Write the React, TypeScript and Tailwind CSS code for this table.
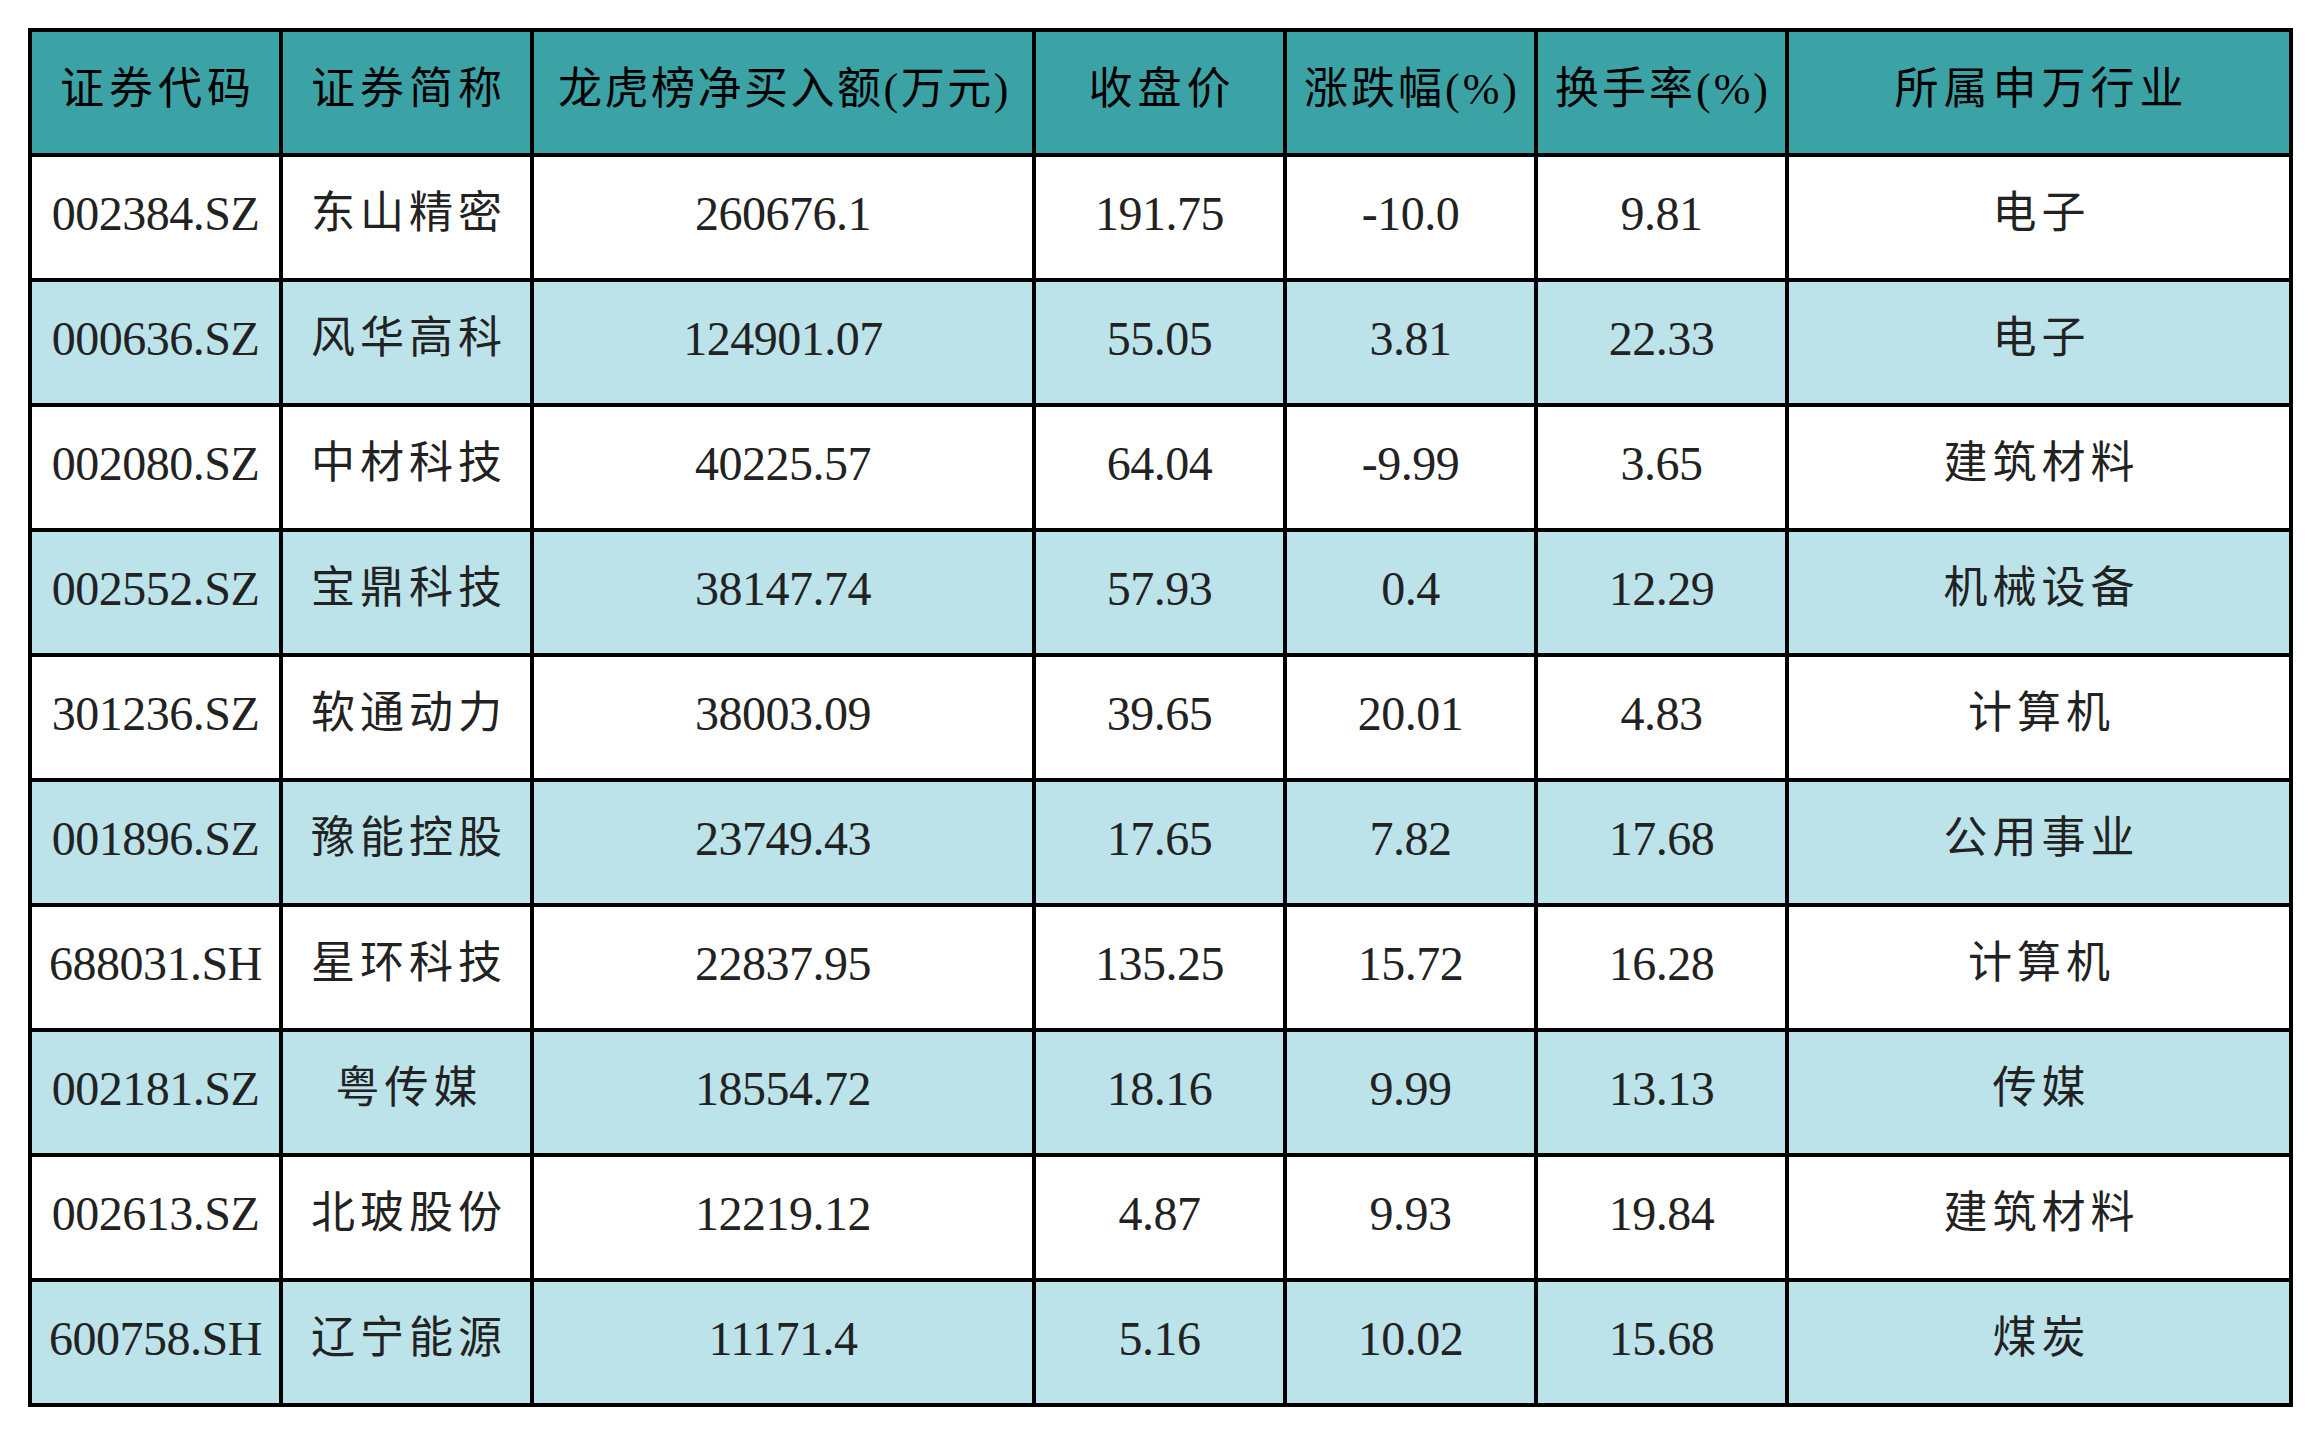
import React from 'react';

// 龙虎榜净买入额前十个股
const headers = [
  { label: '证券代码', track: 'tracking-[5px] pl-[5px]' },
  { label: '证券简称', track: 'tracking-[5px] pl-[5px]' },
  { label: '龙虎榜净买入额(万元)', track: 'tracking-[2.5px] pl-[3px]' },
  { label: '收盘价', track: 'tracking-[5px] pl-[5px]' },
  { label: '涨跌幅(%)', track: 'tracking-[3px] pl-[3px]' },
  { label: '换手率(%)', track: 'tracking-[3px] pl-[3px]' },
  { label: '所属申万行业', track: 'tracking-[5px] pl-[5px]' },
];

const rows: string[][] = [
  ['002384.SZ', '东山精密', '260676.1', '191.75', '-10.0', '9.81', '电子'],
  ['000636.SZ', '风华高科', '124901.07', '55.05', '3.81', '22.33', '电子'],
  ['002080.SZ', '中材科技', '40225.57', '64.04', '-9.99', '3.65', '建筑材料'],
  ['002552.SZ', '宝鼎科技', '38147.74', '57.93', '0.4', '12.29', '机械设备'],
  ['301236.SZ', '软通动力', '38003.09', '39.65', '20.01', '4.83', '计算机'],
  ['001896.SZ', '豫能控股', '23749.43', '17.65', '7.82', '17.68', '公用事业'],
  ['688031.SH', '星环科技', '22837.95', '135.25', '15.72', '16.28', '计算机'],
  ['002181.SZ', '粤传媒', '18554.72', '18.16', '9.99', '13.13', '传媒'],
  ['002613.SZ', '北玻股份', '12219.12', '4.87', '9.93', '19.84', '建筑材料'],
  ['600758.SH', '辽宁能源', '11171.4', '5.16', '10.02', '15.68', '煤炭'],
];

const font = "font-['Liberation_Serif','Noto_Sans_CJK_SC',serif]";

export default function App() {
  return (
    <div className="w-[2319px] h-[1434px] bg-white p-[28px]">
      <div
        className={`grid grid-cols-[247px_247px_498px_247px_247px_247px_500px] grid-rows-[repeat(11,121px)] gap-[4px] bg-black p-[4px] w-fit ${font}`}
      >
        {headers.map((h) => (
          <div
            key={h.label}
            className={`bg-[#3ba3a6] flex items-center justify-center pb-[6px] text-[44px] text-black ${h.track}`}
          >
            {h.label}
          </div>
        ))}
        {rows.map((row, i) =>
          row.map((cell, j) => {
            const isCn = j === 1 || j === 6;
            return (
              <div
                key={`${i}-${j}`}
                className={`flex items-center justify-center pb-[8px] text-[#222222] ${
                  i % 2 === 1 ? 'bg-[#bce3e9]' : 'bg-white'
                } ${isCn ? 'text-[44px] tracking-[5px] pl-[5px]' : 'text-[48px] tracking-[-0.5px]'}`}
              >
                {cell}
              </div>
            );
          })
        )}
      </div>
    </div>
  );
}
